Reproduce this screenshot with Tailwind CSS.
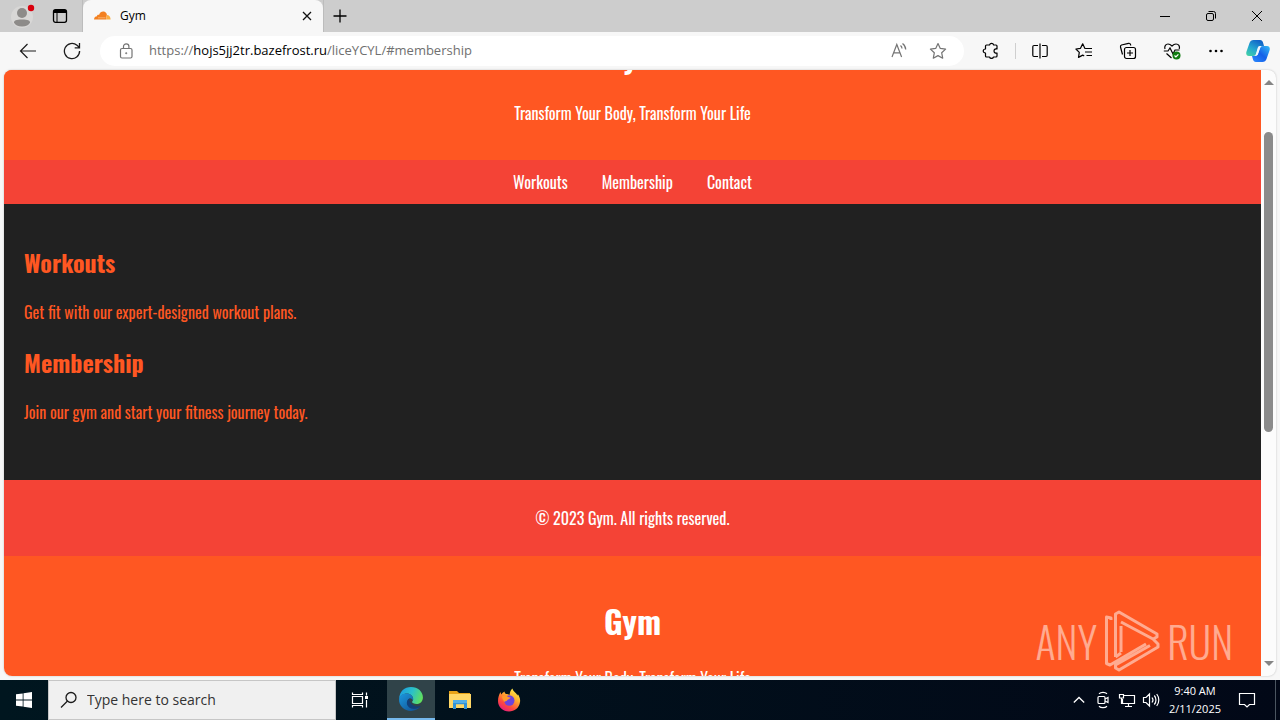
<!DOCTYPE html>
<html lang="en">
<head>
<meta charset="utf-8">
<title>Gym</title>
<script src="https://cdn.jsdelivr.net/npm/@tailwindcss/browser@4"></script>
</head>
<body class="flex h-screen flex-col overflow-hidden bg-[#f7f7f7] font-['Open_Sans','Noto_Sans',sans-serif] text-black">

<!-- Tab strip -->
<div class="flex h-8 shrink-0 items-stretch bg-[#cdcdcd]">
  <button aria-label="Profile" class="flex w-11 items-center justify-center">
    <svg class="h-8 w-7" viewBox="0 0 28 32"><circle cx="14" cy="17" r="11" fill="#d8d7d6"/><circle cx="14" cy="13" r="5" fill="#8d8b89"/><path d="M6 22.500c0-2 2-3 8-3s8 1 8 3c-1 2.500-4 4-8 4s-7-1.500-8-4Z" fill="#8d8b89"/><circle cx="23" cy="8" r="3.200" fill="#d9000d"/></svg>
  </button>
  <button aria-label="Tab actions" class="flex w-[39px] items-center justify-center border-r border-[#bcbcbc] pr-1.5">
    <svg class="size-4" viewBox="0 0 16 16" fill="none" stroke="#000" stroke-width="1.300"><rect x="1.500" y="1.700" width="13" height="12.600" rx="2"/><path d="M2 3.500h12" stroke-width="3"/><path d="M5 4v10" stroke-width="1"/></svg>
  </button>
  <div class="flex w-60 items-center rounded-t-lg bg-[#f7f7f7] pr-2 pl-[11px]">
    <svg class="h-4 w-[17px]" viewBox="0 0 17 16"><path d="M0 11.600C0 9.500 1.500 8.300 3 8.300 3 6.800 4.500 6.500 5 7c.8-3 3.200-4 5-3.500 1.600.4 2.600 1.600 2.900 3.300L12 11.600Z" fill="#f38020"/><path d="M12 11.600 12.900 7c2.200 0 3.700 1.800 3.700 4.600Z" fill="#fbad41"/><path d="M4 9.800h7.500" stroke="#fbc48c" stroke-width=".7"/></svg>
    <span class="ml-[9px] flex-1 text-xs">Gym</span>
    <button aria-label="Close tab" class="flex size-4 items-center justify-center"><svg class="size-[10px]" viewBox="0 0 10 10" stroke="#111" stroke-width="1.300"><path d="m1 1 8 8M9 1 1 9"/></svg></button>
  </div>
  <button aria-label="New tab" class="flex w-8 items-center justify-center border-l border-[#bcbcbc]"><svg class="size-4" viewBox="0 0 16 16" stroke="#000" stroke-width="1.300"><path d="M8 1.500v13M1.500 8h13"/></svg></button>
  <div class="ml-auto flex">
    <button aria-label="Minimize" class="flex w-[46px] items-center justify-center"><svg class="size-3" viewBox="0 0 12 12" stroke="#000"><path d="M1 6.500h10"/></svg></button>
    <button aria-label="Restore" class="flex w-[46px] items-center justify-center"><svg class="size-3" viewBox="0 0 12 12" fill="none" stroke="#000"><rect x="1.500" y="3.500" width="7" height="7" rx="1.500"/><path d="M3.500 1.500h5a2 2 0 0 1 2 2v5"/></svg></button>
    <button aria-label="Close" class="flex w-[46px] items-center justify-center"><svg class="size-3" viewBox="0 0 12 12" stroke="#000"><path d="m1 1 10 10M11 1 1 11"/></svg></button>
  </div>
</div>

<!-- Address bar -->
<div class="flex h-[38px] shrink-0 items-center">
  <button aria-label="Back" class="flex w-11 justify-center pl-3"><svg class="size-[18px]" viewBox="0 0 18 18" fill="none" stroke="#1c1c1c" stroke-width="1.200"><path d="M17 9H1.500M8.500 2l-7 7 7 7"/></svg></button>
  <button aria-label="Refresh" class="flex w-14 justify-center"><svg class="size-[18px]" viewBox="0 0 18 18" fill="none" stroke="#1c1c1c" stroke-width="1.300"><path d="M16.600 9A7.600 7.600 0 1 1 14 3.300L16.500 5.600M16.500 1v4.800h-4.800"/></svg></button>
  <div class="flex h-[30px] flex-1 items-center rounded-full bg-white pr-[17px] pl-[18px]">
    <button aria-label="Site information"><svg class="size-4" viewBox="0 0 16 16" fill="none" stroke="#747474" stroke-width="1.200"><rect x="2.500" y="5.500" width="11.500" height="9.500" rx="1.500"/><path d="M5.500 5.500V3.500a2.700 2.700 0 0 1 5.400 0v2"/><circle cx="8.200" cy="10.200" r=".7" fill="#747474" stroke-width=".6"/></svg></button>
    <div class="ml-[15px] flex-1 text-[13px] whitespace-nowrap text-[#707070]">https://<span class="text-black">hojs5jj2tr.bazefrost.ru</span>/liceYCYL/#membership</div>
    <button aria-label="Read aloud"><svg class="size-[18px]" viewBox="0 0 18 18" fill="none" stroke="#747474" stroke-width="1.200"><path d="m2 15 4.800-12.500L11.600 15M3.600 10.800h6.400M10.500 3.500c1 .8 1.500 1.800 1.500 3M12.500 1.500c2 1.500 3.200 3.500 3.200 6"/></svg></button>
    <button aria-label="Add to favorites" class="ml-[21px]"><svg class="size-[18px]" viewBox="0 0 18 18" fill="none" stroke="#747474" stroke-width="1.200" stroke-linejoin="round"><path d="m9 1.500 2.300 4.900 5.300.7-3.900 3.700 1 5.400L9 13.600l-4.700 2.600 1-5.400L1.400 7.100l5.300-.7Z"/></svg></button>
  </div>
  <div class="flex items-center pr-2.5 pl-[18px]">
    <button aria-label="Extensions" class="flex w-[18px]"><svg class="size-[18px]" viewBox="0 0 18 18" fill="none" stroke="#000" stroke-width="1.200" stroke-linejoin="round"><path d="M4.500 3h3a2.200 2.200 0 0 1 4.200 0H14a1 1 0 0 1 1 1v3c-1.200-.5-3 .2-3 2s1.800 2.500 3 2v3a1 1 0 0 1-1 1h-2.500a2.100 2.100 0 0 1-4 0h-3a1 1 0 0 1-1-1v-3C.5 11 .5 7 3.500 7V4a1 1 0 0 1 1-1Z"/></svg></button>
    <div class="mx-[15px] h-4 w-px bg-[#cfcfcf]"></div>
    <div class="flex items-center gap-[26px]">
      <button aria-label="Split screen"><svg class="size-[18px]" viewBox="0 0 18 18" fill="none" stroke="#000" stroke-width="1.200"><path d="M9 1.500v15M7 3.500H3a1.200 1.200 0 0 0-1.200 1.200v8.600A1.200 1.200 0 0 0 3 14.500h4M11 3.500h4a1.200 1.200 0 0 1 1.200 1.200v8.600a1.200 1.200 0 0 1-1.200 1.200h-4"/></svg></button>
      <button aria-label="Favorites"><svg class="size-[18px]" viewBox="0 0 18 18" fill="none" stroke="#000" stroke-width="1.200" stroke-linejoin="round"><path d="M11 6.500 9.800 6.300 7.700 1.800 5.500 6.300.9 7l3.400 3.400-.8 5 4.200-2.300 1.500.9M11 6.500h6M10 10h7M11.500 13.500H17"/></svg></button>
      <button aria-label="Collections"><svg class="size-[18px]" viewBox="0 0 18 18" fill="none" stroke="#000" stroke-width="1.200"><rect x="5.500" y="5.500" width="11" height="11" rx="2"/><path d="M11 8v6M8 11h6M3.500 12.500l-2-7.500c-.2-1 .3-1.700 1-2l7-1.700c1-.2 1.800.3 2 1.200l.2 1"/></svg></button>
      <button aria-label="Browser essentials"><svg class="size-[18px]" viewBox="0 0 18 18" fill="none" stroke="#000" stroke-width="1.200"><path d="M2 7C1 4 3 2 5 2c2 0 3 1 4 2 1-1 2-2 4-2 2.500 0 4.200 2.200 3.200 5M.8 9H5l2-3 3 6 2-4h4.500M3.500 11.500 8.500 16"/><circle cx="13.500" cy="13.500" r="4" fill="#107c10" stroke="none"/><path d="m11.500 13.500 1.400 1.400 2.500-2.600" stroke="#fff"/></svg></button>
      <button aria-label="Settings and more"><svg class="size-[18px]" viewBox="0 0 18 18"><circle cx="3.500" cy="9" r="1.300"/><circle cx="9" cy="9" r="1.300"/><circle cx="14.500" cy="9" r="1.300"/></svg></button>
    </div>
    <button aria-label="Copilot" class="ml-[21px]"><svg class="size-6" viewBox="0 0 24 24"><defs><linearGradient id="cl" x1="0" y1="1" x2=".6" y2="0"><stop stop-color="#45d6a0"/><stop offset=".5" stop-color="#24a7d0"/><stop offset="1" stop-color="#1166c8"/></linearGradient><linearGradient id="cr" x1="0" y1="1" x2="1" y2="0"><stop stop-color="#2c8bff"/><stop offset=".5" stop-color="#1560e8"/><stop offset="1" stop-color="#34bdf5"/></linearGradient></defs><path d="M7.500 1H14c2 0 2.800 1.500 3.300 3.500L18 7h-3c-2 0-2.800 1-3.300 3l-1.200 4c-.6 2-1.500 3-3.500 3H3c-2.500 0-3.300-2-2.500-4.500L3.500 4C4.200 2 5.500 1 7.500 1Z" fill="url(#cl)"/><path d="M16.500 23H10c-2 0-2.800-1.500-3.300-3.500L6 17h3c2 0 2.800-1 3.300-3l1.200-4c.6-2 1.500-3 3.500-3h4c2.500 0 3.300 2 2.500 4.500l-3 8.500c-.7 2-2 3-4 3Z" fill="url(#cr)"/><path d="m12 8-2.500 8.500c2 0 2.500-1 3-3L15 7c-1.500 0-2.500 0-3 1Z" fill="#eef8ff"/></svg></button>
  </div>
</div>

<!-- Web page viewport -->
<div class="mr-1 mb-1 ml-1 flex min-h-0 flex-1 overflow-hidden rounded-lg bg-[#fcfcfc] shadow-[0_0_2px_#bbbbbb]">
  <div class="relative min-w-0 flex-1 overflow-hidden bg-[#ff5722] font-['Oswald','Liberation_Sans_Narrow','Liberation_Sans',sans-serif] text-base leading-6">
    <header class="-mt-[79px] bg-[#ff5722] pt-[41px] pb-[35px] text-center text-white">
      <h1 class="mb-[21px] text-[32px] leading-[48px] font-bold">Gym</h1>
      <p>Transform Your Body, Transform Your Life</p>
    </header>
    <nav class="flex justify-center gap-[34px] bg-[#f44336] py-2.5 text-white">
      <a href="#workouts">Workouts</a>
      <a href="#membership">Membership</a>
      <a href="#contact">Contact</a>
    </nav>
    <main class="bg-[#212121] px-5 pt-10 pb-14 text-[#ff5722]">
      <section id="workouts">
        <h2 class="mb-5 text-2xl leading-9 font-bold">Workouts</h2>
        <p>Get fit with our expert-designed workout plans.</p>
      </section>
      <section id="membership" class="mt-5">
        <h2 class="mb-5 text-2xl leading-9 font-bold">Membership</h2>
        <p>Join our gym and start your fitness journey today.</p>
      </section>
    </main>
    <footer class="bg-[#f44336] py-[26px] text-center text-white">
      <p>© 2023 Gym. All rights reserved.</p>
    </footer>
    <section class="pt-[41px] text-center text-white">
      <h1 class="mb-[21px] text-[32px] leading-[48px] font-bold">Gym</h1>
      <p>Transform Your Body, Transform Your Life</p>
    </section>
    <!-- Watermark -->
    <div class="absolute right-7 bottom-1 flex items-center gap-[7px] text-[42px] leading-[62px] font-light text-white/50">
      <span>ANY</span>
      <svg class="h-[62px] w-14" viewBox="0 0 56 62" fill="none" stroke="currentColor" stroke-width="3" stroke-linejoin="round"><path d="M7 10V8L2.500 7v46.500L6 55 42 34M11.500 47V4L15 2l38 22v3l-4 2L17 12M17 16v26M11.500 47 17 43M49 29l5 5v3L15 60l-3.500-2v-3L46 35.500"/></svg>
      <span>RUN</span>
    </div>
  </div>
  <!-- Scrollbar -->
  <div class="flex w-[15px] shrink-0 flex-col items-center py-2">
    <svg class="h-2 w-[10px]" viewBox="0 0 10 8"><path d="M0 7 5 2l5 5Z" fill="#858585"/></svg>
    <div class="mt-[46px] h-[300px] w-[9px] rounded-full bg-[#8b8b8b]"></div>
    <svg class="mt-auto h-2 w-[10px]" viewBox="0 0 10 8"><path d="M0 1h10L5 6Z" fill="#858585"/></svg>
  </div>
</div>

<!-- Taskbar -->
<div class="flex h-10 shrink-0 items-stretch bg-linear-to-r from-[#00161f] to-[#020817] text-white">
  <button aria-label="Start" class="flex w-12 items-center justify-center"><svg class="size-4" viewBox="0 0 16 16" fill="#fff"><path d="M0 2.300 6.700 1.400v6.200H0ZM7.500 1.300 16 0v7.600H7.500ZM0 8.400h6.700v6.200L0 13.700ZM7.500 8.400H16V16l-8.500-1.300Z"/></svg></button>
  <label class="flex w-72 items-center border border-[#c6c6c6] bg-[#f0f0f0] pl-[11px] text-[#222222]">
    <svg class="size-[18px]" viewBox="0 0 18 18" fill="none" stroke="#1a1a1a" stroke-width="1.300"><circle cx="11" cy="6.500" r="5"/><path d="M7.500 10 1 16.500"/></svg>
    <input type="text" aria-label="Search" placeholder="Type here to search" class="ml-[9px] min-w-0 flex-1 bg-transparent text-sm outline-none placeholder:text-[#333333]">
  </label>
  <button aria-label="Task view" class="flex w-[51px] items-center justify-center pr-[3px]"><svg class="size-[18px]" viewBox="0 0 18 18" fill="none" stroke="#fff" stroke-width="1.200"><path d="M1.500 1.500v2h10v-2M1.500 16.500v-2h10v2M1.500 5.500h10v7h-10ZM15.500 1.500v3M15.500 9v7.500"/><path d="M15.500 5v3" stroke-width="3"/></svg></button>
  <button aria-label="Microsoft Edge" class="flex w-12 items-center justify-center border-b-2 border-[#76b9ed] bg-[#304349]"><svg class="size-[26px]" viewBox="0 0 24 24"><defs><linearGradient id="e1" x1="0" y1=".3" x2="1" y2=".6"><stop stop-color="#1b9de2"/><stop offset=".5" stop-color="#2bc0c9"/><stop offset="1" stop-color="#62e15a"/></linearGradient><linearGradient id="e2" x1="0" y1="0" x2="1" y2="1"><stop stop-color="#1b98df"/><stop offset="1" stop-color="#114a8b"/></linearGradient></defs><path d="M1 12C1.500 5 6 1 12 1c6.500 0 11 4.500 11 9.500 0 3.500-2.500 6-5.800 6-2.400 0-4.200-.8-4.200-1.700 0-.6 1-1 1-2.800 0-2.500-2.500-5-6-5-3 0-6 2-7 5Z" fill="url(#e1)"/><path d="M1 12c.5-3 3-5 7-5 3.500 0 6 2.500 6 5 0 .5-.1 1-.3 1.400C13 11.500 11.500 11 10.500 11.500 6.500 13.500 9 22 17 20.500c1.500-.3 2.500-.8 3.500-1.300C18.500 21.800 15.500 23 12 23 6 23 .5 18.500 1 12Z" fill="url(#e2)"/><path d="M10.500 11.500c-4 2-3 9.500 4 9.500 2.500 0 4.500-.8 6-1.800.7-.5.400-1-.3-.8-5 1.800-10.200-2.400-9.700-6.900Z" fill="#123f79"/></svg></button>
  <button aria-label="File Explorer" class="flex w-[49px] items-center justify-center"><svg class="size-[22px]" viewBox="0 0 22 22"><path d="M0 2h8l2 2h11v3H0Z" fill="#e8a317"/><path d="M0 5h22v14H0Z" fill="#ffd766"/><path d="M4 11h14v9h-3v-4.500H7V20H4Z" fill="#3292d6"/><path d="M4 11h14v3H4Z" fill="#53aee7"/><path d="M7 15.500h8V19H7Z" fill="#ffd766"/></svg></button>
  <button aria-label="Firefox" class="flex w-[49px] items-center justify-center"><svg class="size-6" viewBox="0 0 24 24"><defs><linearGradient id="ff" x1=".8" y1="0" x2=".2" y2="1"><stop stop-color="#fff44f"/><stop offset=".35" stop-color="#ffb02e"/><stop offset=".7" stop-color="#ff4a3c"/><stop offset="1" stop-color="#e31587"/></linearGradient></defs><path d="M3.500 4c0 1 .5 1.800 1 2.500C5.300 5 6 4.500 7.500 3.500c0 1 .5 1.800 1.500 2.500 1.500 0 2.500.3 3.500 1C13 4 13.500 2 15.500.5c.5 3 3.500 4 5 7 .3-.6.300-1 .2-1.500 1.800 2.500 2.800 5 2.300 8-.8 6-5.500 9.500-11 9.500C6 23.500 1 19 1 13c0-3.500 1-6.500 2.500-9Z" fill="url(#ff)"/><circle cx="12.300" cy="12.500" r="5.200" fill="#6d43dd"/><path d="M5 8.500c2-1.500 4.500-1 6 .5l2.500.5c0 1.500-2.500 1.500-3 2.500-.5 1.500-3 1-3.300 2-.5-2-2.200-3-2.200-5.500Z" fill="#ff9a2b"/></svg></button>
  <div class="ml-auto flex items-center">
    <button aria-label="Show hidden icons" class="flex w-6 justify-center"><svg class="h-4 w-3" viewBox="0 0 12 16" fill="none" stroke="#fff" stroke-width="1.300"><path d="m.8 10.500 5.200-5 5.200 5"/></svg></button>
    <button aria-label="Meet now" class="flex w-6 justify-center"><svg class="h-[18px] w-4" viewBox="0 0 16 18" fill="none" stroke="#fff" stroke-width="1.200"><rect x="3" y="5.500" width="7" height="7" rx="1"/><path d="m10 8 3-1.500v5L10 10M4 2.800c2-1.800 6-1.800 8 0M4 15.200c2 1.800 6 1.800 8 0"/></svg></button>
    <button aria-label="Network" class="flex w-6 justify-center"><svg class="size-[18px]" viewBox="0 0 18 18" fill="none" stroke="#fff" stroke-width="1.200"><path d="M6 4.500h10.500v8H4.500V8M10.500 12.500v3M7 15.500h7M1.500 3.500h4V7h-4ZM3.500 7v6"/></svg></button>
    <button aria-label="Volume" class="flex w-6 justify-center"><svg class="size-[18px]" viewBox="0 0 18 18" fill="none" stroke="#fff" stroke-width="1.200"><path d="M1.500 6.500H4L7.500 3v12L4 11.500H1.500ZM10 6.500c1.200 1.500 1.200 3.500 0 5M12.300 4.500c2.200 2.500 2.200 6.500 0 9M14.700 3c2.800 3.500 2.800 8.500 0 12"/></svg></button>
    <button class="mx-1.5 text-center text-[11px] leading-[18px] whitespace-nowrap"><span class="block">9:40 AM</span><span class="block">2/11/2025</span></button>
    <button aria-label="Notifications" class="mr-2 flex w-10 justify-center"><svg class="size-[18px]" viewBox="0 0 18 18" fill="none" stroke="#fff" stroke-width="1.200"><path d="M1.500 2.500h15v11h-5L9 16l-2.500-2.500h-5Z"/></svg></button>
    <button aria-label="Show desktop" class="h-10 w-[5px] border-l border-[#4b5560]"></button>
  </div>
</div>
</body>
</html>
